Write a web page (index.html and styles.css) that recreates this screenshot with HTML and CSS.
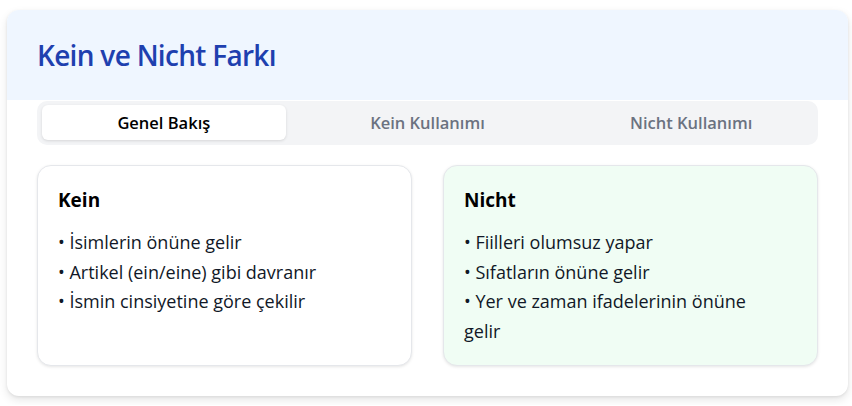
FILE: index.html
```html
<!DOCTYPE html>
<html lang="tr">
<head>
<meta charset="utf-8">
<title>Kein ve Nicht Farkı</title>
<link rel="stylesheet" href="styles.css">
</head>
<body>
<div class="page">
  <div class="panel">
    <div class="panel-header">
      <h1 class="title">Kein ve Nicht Farkı</h1>
    </div>
    <div class="panel-body">
      <div class="tabs">
        <div class="tab tab-active">Genel Bakış</div>
        <div class="tab">Kein Kullanımı</div>
        <div class="tab">Nicht Kullanımı</div>
      </div>
      <div class="cards">
        <div class="card">
          <h3 class="card-title">Kein</h3>
          <ul class="list">
            <li>• İsimlerin önüne gelir</li>
            <li>• Artikel (ein/eine) gibi davranır</li>
            <li>• İsmin cinsiyetine göre çekilir</li>
          </ul>
        </div>
        <div class="card card-green">
          <h3 class="card-title">Nicht</h3>
          <ul class="list">
            <li>• Fiilleri olumsuz yapar</li>
            <li>• Sıfatların önüne gelir</li>
            <li>• Yer ve zaman ifadelerinin önüne gelir</li>
          </ul>
        </div>
      </div>
    </div>
  </div>
</div>
</body>
</html>
```
FILE: styles.css
```css
* { box-sizing: border-box; }
html, body { margin: 0; padding: 0; background: #ffffff; }
body {
  font-family: "Open Sans", "Noto Sans", "Liberation Sans", sans-serif;
  color: #111827;
}
.page {
  padding: 10px 4px 9px 7px;
}
.panel {
  background: #ffffff;
  border-radius: 12px;
  box-shadow: 0 4px 10px rgba(0,0,0,0.10), 0 1px 3px rgba(0,0,0,0.08);
  overflow: hidden;
}
.panel-header {
  background: #eff6ff;
  height: 90px;
  padding: 0 30px;
  display: flex;
  align-items: center;
}
.title {
  margin: 0;
  font-size: 28px;
  font-weight: 600;
  letter-spacing: -0.7px;
  color: #1e40af;
}
.panel-body {
  padding: 1px 30px 30px 30px;
}
.tabs {
  background: #f3f4f6;
  border-radius: 10px;
  padding: 4px 5px;
  display: grid;
  grid-template-columns: repeat(3, 1fr);
  gap: 20px;
  height: 44px;
}
.tab {
  display: flex;
  align-items: center;
  justify-content: center;
  font-size: 16.5px;
  font-weight: 600;
  color: #6b7280;
  border-radius: 6px;
  height: 35px;
}
.tab-active {
  background: #ffffff;
  color: #000000;
  box-shadow: 0 1px 3px rgba(0,0,0,0.12);
}
.cards {
  margin-top: 20px;
  display: grid;
  grid-template-columns: 1fr 1fr;
  gap: 31px;
}
.card {
  background: #ffffff;
  border: 1px solid #e5e7eb;
  border-radius: 14px;
  box-shadow: 0 1px 3px rgba(0,0,0,0.10);
  padding: 20px 20px 18px 20px;
  min-height: 201px;
}
.card-green {
  background: #f0fdf4;
}
.card-title {
  margin: 0 0 13px 0;
  font-size: 19px;
  line-height: 29px;
  font-weight: 700;
  color: #000000;
}
.list {
  margin: 0;
  padding: 0;
  max-width: 305px;
  list-style: none;
  font-size: 18px;
  line-height: 29.5px;
  color: #111827;
}
```
